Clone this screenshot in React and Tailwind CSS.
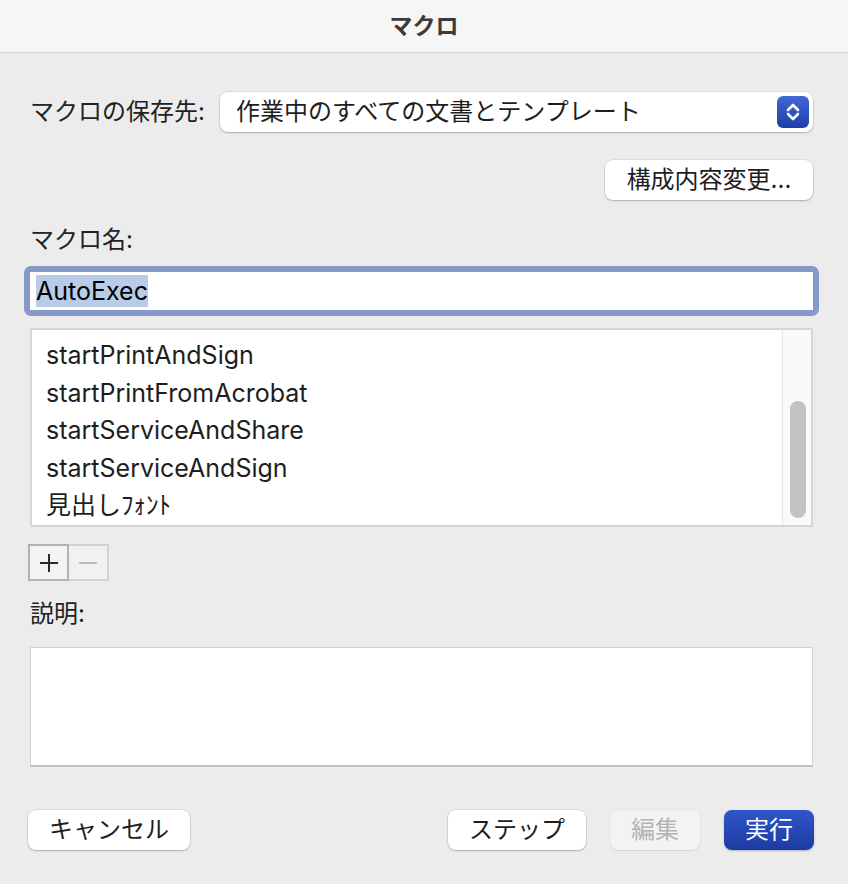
const font = { fontFamily: 'Inter, "Noto Sans CJK JP", "Noto Sans", sans-serif' };

function PushButton({ children, className = "" }) {
  return (
    <button
      className={
        "h-[40px] rounded-[8px] bg-white text-[24px] text-[#1e1e1e] shadow-[0_0_0_0.5px_rgba(0,0,0,0.12),0_1px_2px_rgba(0,0,0,0.22)] flex items-center justify-center " +
        className
      }
    >
      {children}
    </button>
  );
}

export default function App() {
  const macros = [
    "startPrintAndSign",
    "startPrintFromAcrobat",
    "startServiceAndShare",
    "startServiceAndSign",
    "見出しﾌｫﾝﾄ",
  ];

  return (
    <div className="w-[848px] h-[884px] bg-[#ececec] flex flex-col overflow-hidden" style={font}>
      {/* Title bar */}
      <div className="h-[53px] shrink-0 bg-[#f6f6f6] border-b border-[#d3d3d3] flex items-center justify-center">
        <span className="text-[23px] font-bold text-[#3b3b3b] leading-none">マクロ</span>
      </div>

      <div className="flex flex-col pl-[30px] pr-[35px]">
        {/* Save location */}
        <div className="mt-[39px] flex items-center">
          <span className="w-[190px] shrink-0 text-[24px] text-[#222] leading-[30px]">マクロの保存先:</span>
          <div className="flex-1 h-[40px] rounded-[8px] bg-white shadow-[0_0_0_0.5px_rgba(0,0,0,0.12),0_1px_2px_rgba(0,0,0,0.22)] flex items-center pl-[16px] pr-[4px]">
            <span className="flex-1 text-[24px] text-[#1e1e1e]">作業中のすべての文書とテンプレート</span>
            <div className="w-[32px] h-[32px] rounded-[6px] bg-gradient-to-b from-[#4068d6] to-[#1f3ea6] flex items-center justify-center">
              <svg width="32" height="32" viewBox="0 0 32 32" fill="none" stroke="white" strokeWidth="2.6" strokeLinecap="round" strokeLinejoin="round">
                <path d="M11 14 L16 9 L21 14" />
                <path d="M11 18 L16 23 L21 18" />
              </svg>
            </div>
          </div>
        </div>

        {/* Organizer button */}
        <div className="mt-[28px] flex justify-end">
          <PushButton className="w-[208px]">構成内容変更...</PushButton>
        </div>

        {/* Macro name */}
        <div className="mt-[25px] text-[24px] text-[#222] leading-[30px]">マクロ名:</div>
        <div className="mt-[11px] -mx-[6px] p-[6px] rounded-[7px] bg-[#8699c9]">
          <div className="h-[38px] bg-white flex items-center pl-[6px]">
            <span className="bg-[#b8cbe8] text-[25px] text-black leading-[32px]">AutoExec</span>
          </div>
        </div>

        {/* Macro list */}
        <div className="mt-[12px] h-[199px] border-2 border-[#d6d6d6] bg-white flex">
          <div className="flex-1 flex flex-col pt-[7px] pl-[14px]">
            {macros.map((m) => (
              <div key={m} className="h-[38px] flex items-center text-[25px] text-[#1e1e1e]">
                {m}
              </div>
            ))}
          </div>
          <div className="w-[29px] bg-[#fafafa] border-l border-[#e6e6e6] flex flex-col pt-[71px] pl-[7px]">
            <div className="w-[16px] h-[117px] rounded-full bg-[#c2c2c2]" />
          </div>
        </div>

        {/* Add / remove */}
        <div className="mt-[17px] flex -ml-[2px]">
          <div className="w-[41px] h-[37px] bg-[#f3f3f3] border-2 border-[#b2b2b2] flex items-center justify-center">
            <svg width="22" height="22" viewBox="0 0 22 22" stroke="#2a2a2a" strokeWidth="2">
              <path d="M11 2 V20 M2 11 H20" />
            </svg>
          </div>
          <div className="w-[40px] h-[37px] bg-[#f1f1f1] border-2 border-l-0 border-[#d2d2d2] flex items-center justify-center">
            <svg width="22" height="22" viewBox="0 0 22 22" stroke="#bdbdbd" strokeWidth="2">
              <path d="M2 11 H20" />
            </svg>
          </div>
        </div>

        {/* Description */}
        <div className="mt-[18px] text-[24px] text-[#222] leading-[30px]">説明:</div>
        <div className="mt-[18px] h-[120px] bg-white border border-[#d2d2d2] border-b-2 border-b-[#c2c2c2]" />

        {/* Bottom buttons */}
        <div className="mt-[43px] flex items-center -ml-[2px] -mr-[1px]">
          <PushButton className="w-[162px]">キャンセル</PushButton>
          <div className="flex-1" />
          <PushButton className="w-[138px]">ステップ</PushButton>
          <button className="ml-[24px] w-[90px] h-[40px] rounded-[8px] bg-[#f3f3f3] text-[24px] text-[#b4b4b4] shadow-[0_0_0_0.5px_rgba(0,0,0,0.06),0_1px_1px_rgba(0,0,0,0.08)]">
            編集
          </button>
          <button className="ml-[24px] w-[90px] h-[40px] rounded-[8px] bg-gradient-to-b from-[#3057c9] to-[#1d3aa3] text-[24px] text-white shadow-[0_1px_2px_rgba(0,0,0,0.25)]">
            実行
          </button>
        </div>
      </div>
    </div>
  );
}
